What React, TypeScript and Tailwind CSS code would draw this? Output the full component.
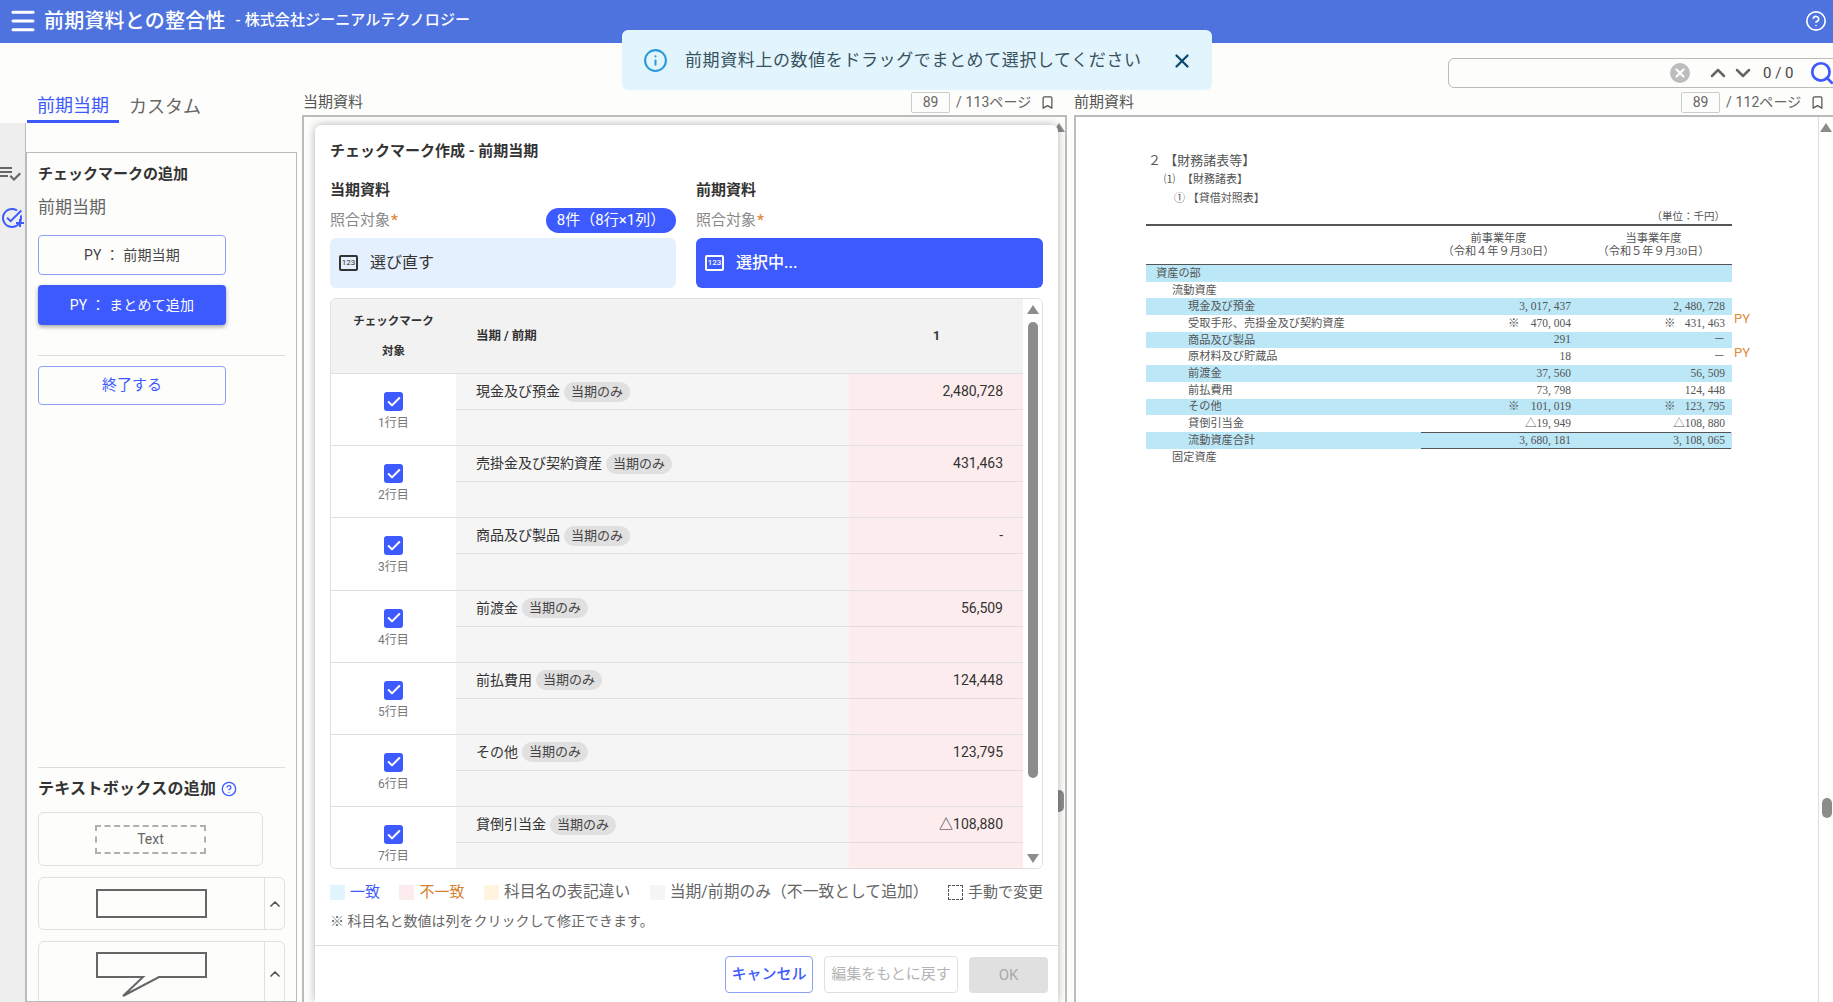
import { Bookmark, Check, ChevronDown, ChevronUp, CircleHelp, Info, Menu, Search, X } from "lucide-react";

const checkRows = [
  { name: "現金及び預金", value: "2,480,728" },
  { name: "売掛金及び契約資産", value: "431,463" },
  { name: "商品及び製品", value: "-" },
  { name: "前渡金", value: "56,509" },
  { name: "前払費用", value: "124,448" },
  { name: "その他", value: "123,795" },
  { name: "貸倒引当金", value: "△108,880" },
];

const docRows = [
  { label: "資産の部", indent: 0, hl: true },
  { label: "流動資産", indent: 1, hl: false },
  { label: "現金及び預金", indent: 2, hl: true, a: "3, 017, 437", b: "2, 480, 728" },
  { label: "受取手形、売掛金及び契約資産", indent: 2, hl: false, a: "470, 004", b: "431, 463", mark: true },
  { label: "商品及び製品", indent: 2, hl: true, a: "291", b: "－" },
  { label: "原材料及び貯蔵品", indent: 2, hl: false, a: "18", b: "－" },
  { label: "前渡金", indent: 2, hl: true, a: "37, 560", b: "56, 509" },
  { label: "前払費用", indent: 2, hl: false, a: "73, 798", b: "124, 448" },
  { label: "その他", indent: 2, hl: true, a: "101, 019", b: "123, 795", mark: true },
  { label: "貸倒引当金", indent: 2, hl: false, a: "△19, 949", b: "△108, 880" },
  { label: "流動資産合計", indent: 2, hl: true, a: "3, 680, 181", b: "3, 108, 065", total: true },
  { label: "固定資産", indent: 1, hl: false },
];

function PageNav({ total }: { total: number }) {
  return (
    <div className="flex items-center text-[14px] text-[#666]">
      <div className="w-[39px] h-[21px] border border-[#ccc] rounded-[2px] flex items-center justify-center">89</div>
      <span className="ml-[6px] w-[78px] tracking-[0.1px]">/ {total}ページ</span>
      <Bookmark size={15} strokeWidth={2} className="ml-[6px] text-[#555]" />
    </div>
  );
}

function Pin({ white }: { white?: boolean }) {
  return (
    <span
      className={
        white
          ? "w-[19px] h-[16px] border-2 border-white rounded-[2px] text-[8px] leading-none flex items-center justify-center text-white"
          : "w-[19px] h-[16px] border-2 border-[#333] rounded-[2px] text-[8px] leading-none flex items-center justify-center text-[#333]"
      }
    >
      123
    </span>
  );
}

function Row({ row, index }: { row: { name: string; value: string }; index: number }) {
  return (
    <div className="flex h-[72.2px] shrink-0 border-b border-[#e0e0e0]">
      <div className="w-[125px] bg-white flex flex-col items-center pt-[18px]">
        <div className="w-[19px] h-[19px] rounded-[3px] bg-[#3d5afe] flex items-center justify-center">
          <Check size={16} strokeWidth={3} className="text-white" />
        </div>
        <div className="mt-[3px] text-[12px] text-[#777]">{index + 1}行目</div>
      </div>
      <div className="w-[393px] bg-[#f5f5f5]">
        <div className="h-[36px] border-b border-[#e0e0e0] flex items-center pl-[20px] text-[14px] text-[#333]">
          {row.name}
          <span className="ml-[4px] h-[20px] px-[7px] rounded-full bg-[#e0e0e0] text-[13px] leading-[20px] text-[#444]">当期のみ</span>
        </div>
      </div>
      <div className="w-[174px] bg-[#fdeced]">
        <div className="h-[36px] border-b border-[#e6dcdc] flex items-center justify-end pr-[20px] text-[14px] text-[#333]">{row.value}</div>
      </div>
    </div>
  );
}

function CheckModal() {
  return (
    <div className="relative z-10 w-[743px] h-[877px] shrink-0 bg-white rounded-t-[6px] shadow-[0_0_8px_rgba(0,0,0,0.3)] flex flex-col">
      <div className="px-[15px] pt-[16px] flex-1">
        <div className="h-[20px] text-[15px] font-bold text-[#333] leading-[20px]">チェックマーク作成 - 前期当期</div>
        <div className="mt-[19px] flex gap-[20px]">
          <div className="w-[346px]">
            <div className="text-[15px] font-bold text-[#333] leading-[20px]">当期資料</div>
            <div className="mt-[8px] h-[25px] flex items-center justify-between">
              <span className="text-[15px] text-[#888]">照合対象<span className="ml-[1px] font-bold text-[#e08a3c]">*</span></span>
              <span className="w-[130px] h-[25px] rounded-full bg-[#3d5afe] text-white text-[15px] flex items-center justify-center">8件（8行×1列）</span>
            </div>
            <div className="mt-[5px] h-[50px] rounded-[6px] bg-[#e4f0fd] flex items-center pl-[9px] gap-[12px] text-[16px] text-[#333]">
              <Pin />
              選び直す
            </div>
          </div>
          <div className="w-[347px]">
            <div className="text-[15px] font-bold text-[#333] leading-[20px]">前期資料</div>
            <div className="mt-[8px] h-[25px] flex items-center">
              <span className="text-[15px] text-[#888]">照合対象<span className="ml-[1px] font-bold text-[#e08a3c]">*</span></span>
            </div>
            <div className="mt-[5px] h-[50px] rounded-[6px] bg-[#3d5afe] flex items-center pl-[9px] gap-[12px] text-[16px] font-medium text-white">
              <Pin white />
              選択中...
            </div>
          </div>
        </div>

        <div className="mt-[10px] w-[713px] h-[571px] border border-[#e0e0e0] rounded-[6px] overflow-hidden flex">
          <div className="w-[692px] flex flex-col">
            <div className="h-[75px] shrink-0 bg-[#f2f2f2] border-b border-[#e0e0e0] flex items-center text-[12.5px] font-bold text-[#333]">
              <div className="w-[125px] flex flex-col items-center gap-[14px] text-[11.5px]">
                <span className="leading-[16px]">チェックマーク</span>
                <span className="leading-[16px]">対象</span>
              </div>
              <div className="w-[393px] pl-[20px]">当期 / 前期</div>
              <div className="w-[174px] pl-[84px]">1</div>
            </div>
            {checkRows.map((row, i) => (
              <Row key={row.name} row={row} index={i} />
            ))}
          </div>
          <div className="flex-1 bg-white flex flex-col items-center">
            <span className="mt-[6px] w-0 h-0 border-x-[6px] border-x-transparent border-b-[9px] border-b-[#8c8c8c]" />
            <div className="mt-[8px] w-[10px] h-[456px] rounded-full bg-[#8c8c8c]" />
            <span className="mt-auto mb-[5px] w-0 h-0 border-x-[6px] border-x-transparent border-t-[9px] border-t-[#8c8c8c]" />
          </div>
        </div>

        <div className="mt-[7px] h-[32px] w-[713px] flex items-center justify-between text-[15px] text-[#666]">
          <div className="flex items-center">
            <span className="w-[15px] h-[15px] bg-[#e1f5fe]" />
            <span className="ml-[5px] text-[#3d5afe]">一致</span>
          </div>
          <div className="flex items-center">
            <span className="w-[15px] h-[15px] bg-[#fdeced]" />
            <span className="ml-[5px] text-[#d9822b]">不一致</span>
          </div>
          <div className="flex items-center">
            <span className="w-[15px] h-[15px] bg-[#fff4e0]" />
            <span className="ml-[5px] text-[15.8px]">科目名の表記違い</span>
          </div>
          <div className="flex items-center">
            <span className="w-[15px] h-[15px] bg-[#f5f5f5]" />
            <span className="ml-[5px] text-[15.8px]">当期/前期のみ（不一致として追加）</span>
          </div>
          <div className="flex items-center">
            <span className="w-[15px] h-[15px] border border-dashed border-[#555]" />
            <span className="ml-[5px]">手動で変更</span>
          </div>
        </div>
        <div className="mt-[3px] text-[14px] leading-[20px] text-[#666]">※ 科目名と数値は列をクリックして修正できます。</div>
      </div>

      <div className="h-[57px] border-t border-[#e0e0e0] flex items-start justify-end gap-[11px] pt-[10px] pr-[10px]">
        <button className="w-[88px] h-[37px] rounded-[4px] border border-[#8da0f5] text-[#3d5afe] text-[15px] font-medium">キャンセル</button>
        <button className="w-[134px] h-[37px] rounded-[4px] border border-[#e0e0e0] text-[#b5b5b5] text-[15px]">編集をもとに戻す</button>
        <button className="w-[79px] h-[36px] mt-[1px] rounded-[4px] bg-[#e0e0e0] text-[#aaa] text-[15px]">OK</button>
      </div>
    </div>
  );
}

function DocPage() {
  return (
    <div className="relative w-[586px] ml-[70px] pt-[35px] text-[#555] [font-family:'Liberation_Serif','Noto_Sans_CJK_JP',serif]">
      <div className="text-[13px] leading-[18px] pl-[2px]">２ 【財務諸表等】</div>
      <div className="text-[11px] leading-[18px] pl-[18px]">⑴<span className="ml-[7px]">【財務諸表】</span></div>
      <div className="text-[11px] leading-[18px] mt-[1px] pl-[28px]">① 【貸借対照表】</div>
      <div className="text-[10.5px] leading-[14px] text-right pr-[7px] mt-[3px]">（単位：千円）</div>
      <div className="h-[2px] bg-[#555]" />
      <div className="h-[39px] flex items-center text-center text-[11.2px] leading-[13px] border-b border-[#555]">
        <div className="w-[275px]" />
        <div className="w-[155px]">前事業年度<br />（令和４年９月30日）</div>
        <div className="w-[155px]">当事業年度<br />（令和５年９月30日）</div>
      </div>
      {docRows.map((r) => (
        <div key={r.label} className={r.hl ? "flex h-[16.7px] items-center bg-[#bbe7f7] text-[11.2px]" : "flex h-[16.7px] items-center text-[11.2px]"}>
          <div className={r.indent === 0 ? "w-[275px] pl-[10px]" : r.indent === 1 ? "w-[275px] pl-[26px]" : "w-[275px] pl-[42px]"}>{r.label}</div>
          <div className={r.total ? "w-[155px] h-full flex items-center justify-between pr-[5px] text-[11.5px] border-y border-[#555]" : "w-[155px] h-full flex items-center justify-between pr-[5px] text-[11.5px]"}>
            <span className="pl-[87px]">{r.mark ? "※" : ""}</span>
            <span>{r.a}</span>
          </div>
          <div className={r.total ? "w-[155px] h-full flex items-center justify-between pr-[6px] text-[11.5px] border-y border-[#555]" : "w-[155px] h-full flex items-center justify-between pr-[6px] text-[11.5px]"}>
            <span className="pl-[88px]">{r.mark ? "※" : ""}</span>
            <span>{r.b}</span>
          </div>
        </div>
      ))}
      <span className="absolute left-[588px] top-[193px] text-[13px] leading-[18px] text-[#e08a3c] [font-family:Roboto,sans-serif]">PY</span>
      <span className="absolute left-[588px] top-[227px] text-[13px] leading-[18px] text-[#e08a3c] [font-family:Roboto,sans-serif]">PY</span>
    </div>
  );
}

export default function App() {
  return (
    <div className="w-[1833px] h-[1002px] overflow-hidden flex flex-col relative bg-[#fdfdfb] text-[#333] [font-family:Roboto,'Noto_Sans_CJK_JP',sans-serif]">
      <header className="h-[43px] shrink-0 bg-[#4e73df] text-white flex items-center pl-[8px] pr-[6px] pb-[2px]">
        <Menu size={30} strokeWidth={2.4} />
        <span className="ml-[6px] text-[20px] tracking-[0.2px] font-medium">前期資料との整合性</span>
        <span className="ml-[10px] text-[15px] tracking-[0.1px] font-medium">- 株式会社ジーニアルテクノロジー</span>
        <CircleHelp size={22} strokeWidth={1.8} className="ml-auto" />
      </header>

      {/* toast */}
      <div className="absolute left-[622px] top-[30px] w-[590px] h-[60px] rounded-[6px] bg-[#e3f5fc] flex items-center pl-[21px] z-20">
        <Info size={25} strokeWidth={2} className="text-[#2b9ad8]" />
        <span className="ml-[17px] mt-[1px] text-[17px] tracking-[0.6px] text-[#37515f]">前期資料上の数値をドラッグでまとめて選択してください</span>
        <X size={22} strokeWidth={2.5} className="ml-[29px] mt-[2px] text-[#0b4a6e]" />
      </div>

      <div className="h-[47px] shrink-0 flex justify-end items-end pb-[2px] mr-[-8px]">
        <div className="w-[393px] h-[30px] border border-[#bbb] rounded-[6px] flex items-center pr-[1px]">
          <div className="ml-[221px] w-[20px] h-[20px] rounded-full bg-[#bdbdbd] flex items-center justify-center">
            <X size={14} strokeWidth={3.5} className="text-white" />
          </div>
          <ChevronUp size={24} strokeWidth={2.5} className="ml-[16px] text-[#666]" />
          <ChevronDown size={24} strokeWidth={2.5} className="ml-[1px] text-[#666]" />
          <span className="ml-[8px] text-[15px] text-[#444] whitespace-nowrap">0 / 0</span>
          <Search size={26} strokeWidth={2.5} className="ml-[15px] text-[#3d5afe]" />
        </div>
      </div>

      <div className="flex-1 flex min-h-0">
        <aside className="w-[302px] shrink-0 flex flex-col">
          <div className="h-[33px] shrink-0 flex pl-[27px] text-[18px]">
            <div className="w-[92px] h-full border-b-[3px] border-[#3d5afe] text-[#3d5afe] flex items-center justify-center">前期当期</div>
            <div className="ml-[10px] flex items-center text-[#666]">カスタム</div>
          </div>
          <div className="flex-1 flex min-h-0">
            <div className="w-[26px] shrink-0 bg-[#eee] border-r border-[#bbb] pt-[38px] flex flex-col text-[#666]">
              <svg width="24" height="24" viewBox="0 0 24 24" fill="currentColor" className="-ml-[2px]">
                <path d="M14 10H2v2h12v-2zm0-4H2v2h12V6zM2 16h8v-2H2v2zm19.5-4.5L23 13l-6.99 7-4.51-4.5L13 14l3.01 3 5.49-5.5z" />
              </svg>
              <svg width="24" height="24" viewBox="0 0 24 24" fill="#3d5afe" className="mt-[21px]">
                <path d="M22 5.18 10.59 16.6l-4.24-4.24 1.41-1.41 2.83 2.83 10-10L22 5.18zm-2.21 5.04c.13.57.21 1.17.21 1.78 0 4.42-3.58 8-8 8s-8-3.58-8-8 3.58-8 8-8c1.58 0 3.04.46 4.28 1.25l1.44-1.44C16.1 2.67 14.13 2 12 2 6.48 2 2 6.48 2 12s4.48 10 10 10 10-4.48 10-10c0-1.19-.22-2.33-.6-3.39l-1.61 1.61zM19 16h-3v2h3v3h2v-3h3v-2h-3v-3h-2v3z" />
              </svg>
            </div>
            <div className="mt-[29px] w-[271px] border border-[#bbb] px-[11px] pt-[11px] overflow-hidden">
              <div className="text-[15px] font-bold text-[#333] leading-[20px]">チェックマークの追加</div>
              <div className="mt-[11px] text-[17px] text-[#666] leading-[24px]">前期当期</div>
              <button className="mt-[16px] w-[188px] h-[40px] rounded-[4px] border border-[#8da0f5] text-[14px] tracking-[0.2px] text-[#444]">PY ： 前期当期</button>
              <button className="mt-[10px] w-[188px] h-[40px] rounded-[4px] bg-[#3d5afe] text-white text-[14px] tracking-[0.2px] block shadow-[0_2px_4px_rgba(0,0,0,0.35)]">PY ： まとめて追加</button>
              <div className="mt-[30px] w-[247px] border-t border-[#ddd]" />
              <button className="mt-[10px] w-[188px] h-[39px] rounded-[4px] border border-[#8da0f5] text-[15px] text-[#3d5afe]">終了する</button>
              <div className="mt-[362px] w-[247px] border-t border-[#ddd]" />
              <div className="mt-[11px] flex items-center text-[16px] tracking-[0.3px] font-bold text-[#333] leading-[20px]">
                テキストボックスの追加
                <CircleHelp size={16} strokeWidth={2} className="ml-[5px] text-[#3d5afe]" />
              </div>
              <div className="mt-[13px] w-[225px] h-[54px] border border-[#e0e0e0] rounded-[6px] flex items-center justify-center">
                <div className="w-[111px] h-[29px] border-2 border-dashed border-[#b0b0b0] flex items-center justify-center text-[14px] text-[#666]">Text</div>
              </div>
              <div className="mt-[11px] w-[247px] h-[53px] border border-[#e0e0e0] rounded-[6px] flex">
                <div className="w-[225px] flex items-center justify-center">
                  <div className="w-[111px] h-[29px] border-2 border-[#666]" />
                </div>
                <div className="flex-1 border-l border-[#e0e0e0] flex items-center justify-center">
                  <ChevronUp size={16} strokeWidth={2.5} className="text-[#555]" />
                </div>
              </div>
              <div className="mt-[11px] w-[247px] h-[70px] border border-[#e0e0e0] rounded-[6px] flex">
                <div className="w-[225px] pt-[10px] pl-[57px]">
                  <svg width="112" height="46" viewBox="0 0 112 46" fill="none" stroke="#666" strokeWidth="2">
                    <path d="M1 1H110V25H63L27 44L47 25H1Z" />
                  </svg>
                </div>
                <div className="flex-1 border-l border-[#e0e0e0] flex justify-center pt-[24px]">
                  <ChevronUp size={16} strokeWidth={2.5} className="text-[#555]" />
                </div>
              </div>
            </div>
          </div>
        </aside>

        <section className="w-[765px] shrink-0 flex flex-col">
          <div className="h-[25px] shrink-0 flex items-center justify-between pl-[1px] pr-[12px] text-[15px] text-[#555]">
            当期資料
            <PageNav total={113} />
          </div>
          <div className="flex-1 min-h-0 border-t-2 border-x-2 border-[#bbb] pl-[11px] pt-[8px] overflow-hidden relative">
            <CheckModal />
            <span className="absolute right-0 top-[6px] w-0 h-0 border-x-[6px] border-x-transparent border-b-[9px] border-b-[#8c8c8c]" />
            <div className="absolute right-[1px] top-[673px] w-[10px] h-[22px] rounded-full bg-[#8c8c8c]" />
          </div>
        </section>

        <section className="w-[759px] ml-[7px] shrink-0 flex flex-col">
          <div className="h-[25px] shrink-0 flex items-center justify-between pr-[8px] text-[15px] text-[#555]">
            前期資料
            <PageNav total={112} />
          </div>
          <div className="flex-1 min-h-0 border-t-2 border-l-2 border-[#bbb] bg-white flex overflow-hidden">
            <div className="w-[742px] shrink-0">
              <DocPage />
            </div>
            <div className="flex-1 border-l border-[#ddd] bg-white flex flex-col items-center relative">
              <span className="mt-[6px] w-0 h-0 border-x-[6px] border-x-transparent border-b-[9px] border-b-[#8c8c8c]" />
              <div className="absolute top-[681px] ml-[2px] w-[10px] h-[20px] rounded-full bg-[#8c8c8c]" />
            </div>
          </div>
        </section>
      </div>
    </div>
  );
}
